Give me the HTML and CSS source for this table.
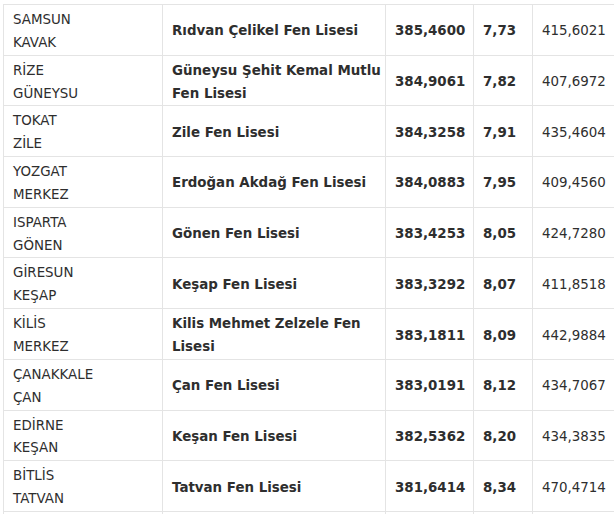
FILE: index.html
```html
<!DOCTYPE html>
<html>
<head>
<meta charset="utf-8">
<link rel="stylesheet" href="styles.css">
</head>
<body>
<div class="wrap">
<table class="tbl">
<colgroup>
<col class="c1"><col class="c2"><col class="c3"><col class="c4"><col class="c5">
</colgroup>
<tbody>
<tr><td>SAMSUN<br>KAVAK</td><td class="b">Rıdvan Çelikel Fen Lisesi</td><td class="b">385,4600</td><td class="b">7,73</td><td>415,6021</td></tr>
<tr><td>RİZE<br>GÜNEYSU</td><td class="b">Güneysu Şehit Kemal Mutlu Fen Lisesi</td><td class="b">384,9061</td><td class="b">7,82</td><td>407,6972</td></tr>
<tr><td>TOKAT<br>ZİLE</td><td class="b">Zile Fen Lisesi</td><td class="b">384,3258</td><td class="b">7,91</td><td>435,4604</td></tr>
<tr><td>YOZGAT<br>MERKEZ</td><td class="b">Erdoğan Akdağ Fen Lisesi</td><td class="b">384,0883</td><td class="b">7,95</td><td>409,4560</td></tr>
<tr><td>ISPARTA<br>GÖNEN</td><td class="b">Gönen Fen Lisesi</td><td class="b">383,4253</td><td class="b">8,05</td><td>424,7280</td></tr>
<tr><td>GİRESUN<br>KEŞAP</td><td class="b">Keşap Fen Lisesi</td><td class="b">383,3292</td><td class="b">8,07</td><td>411,8518</td></tr>
<tr><td>KİLİS<br>MERKEZ</td><td class="b">Kilis Mehmet Zelzele Fen Lisesi</td><td class="b">383,1811</td><td class="b">8,09</td><td>442,9884</td></tr>
<tr><td>ÇANAKKALE<br>ÇAN</td><td class="b">Çan Fen Lisesi</td><td class="b">383,0191</td><td class="b">8,12</td><td>434,7067</td></tr>
<tr><td>EDİRNE<br>KEŞAN</td><td class="b">Keşan Fen Lisesi</td><td class="b">382,5362</td><td class="b">8,20</td><td>434,3835</td></tr>
<tr><td>BİTLİS<br>TATVAN</td><td class="b">Tatvan Fen Lisesi</td><td class="b">381,6414</td><td class="b">8,34</td><td>470,4714</td></tr>
<tr><td>&nbsp;<br>&nbsp;</td><td></td><td></td><td></td><td></td></tr>
</tbody>
</table>
</div>
</body>
</html>
```
FILE: styles.css
```css
html, body {
  margin: 0;
  padding: 0;
  background: #ffffff;
}
.wrap {
  padding: 4px 0 0 3px;
  width: 700px;
  overflow: hidden;
}
.tbl {
  border-collapse: collapse;
  table-layout: fixed;
  width: 660px;
  font-family: "DejaVu Sans", Verdana, sans-serif;
  font-size: 13.4px;
  line-height: 22.85px;
  color: #2e2e2e;
}
.c1 { width: 159px; }
.c2 { width: 223px; }
.c3 { width: 88px; }
.c4 { width: 59px; }
.c5 { width: 131px; }
.tbl td {
  border: 1px solid #e4e4e4;
  padding: 4px 3px 0 9px;
  height: 45.7px;
  vertical-align: middle;
  text-align: left;
}
.tbl td.b {
  font-weight: bold;
}
```
